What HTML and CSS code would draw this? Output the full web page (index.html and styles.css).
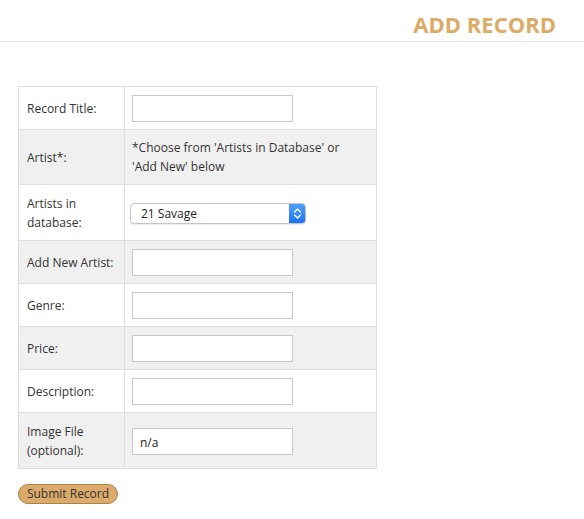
FILE: index.html
```html
<!DOCTYPE html>
<html>
<head>
<meta charset="utf-8">
<link rel="stylesheet" href="styles.css">
</head>
<body>
<header class="top">
  <h1 class="title">ADD RECORD</h1>
</header>
<main class="content">
  <form class="form">
    <table class="record-table">
      <tr>
        <td class="label">Record Title:</td>
        <td class="field"><input class="text-input" type="text"></td>
      </tr>
      <tr class="alt">
        <td class="label">Artist*:</td>
        <td class="field note">*Choose from 'Artists in Database' or<br>'Add New' below</td>
      </tr>
      <tr>
        <td class="label tall">Artists in database:</td>
        <td class="field">
          <div class="select">
            <span class="select-value">21 Savage</span>
            <span class="select-arrow">
              <svg width="9" height="13" viewBox="0 0 9 13"><path d="M1.5 5 L4.5 2 L7.5 5 M1.5 8 L4.5 11 L7.5 8" fill="none" stroke="#fff" stroke-width="1.4" stroke-linecap="round" stroke-linejoin="round"/></svg>
            </span>
          </div>
        </td>
      </tr>
      <tr class="alt">
        <td class="label">Add New Artist:</td>
        <td class="field"><input class="text-input" type="text"></td>
      </tr>
      <tr>
        <td class="label">Genre:</td>
        <td class="field"><input class="text-input" type="text"></td>
      </tr>
      <tr class="alt">
        <td class="label">Price:</td>
        <td class="field"><input class="text-input" type="text"></td>
      </tr>
      <tr>
        <td class="label">Description:</td>
        <td class="field"><input class="text-input" type="text"></td>
      </tr>
      <tr class="alt">
        <td class="label tall">Image File (optional):</td>
        <td class="field"><input class="text-input" type="text" value="n/a"></td>
      </tr>
    </table>
    <button class="submit" type="button">Submit Record</button>
  </form>
</main>
</body>
</html>
```
FILE: styles.css
```css
* { box-sizing: border-box; }
body {
  margin: 0;
  font-family: "Open Sans", "DejaVu Sans", sans-serif;
  font-size: 12px;
  color: #333;
  background: #fff;
}
.top {
  border-bottom: 1px solid #e3e3e3;
  padding: 8px 28px 0 0;
  height: 42px;
}
.title {
  margin: 0;
  text-align: right;
  font-size: 22px;
  line-height: 32px;
  font-weight: 700;
  color: #dcab66;
}
.content {
  padding: 44px 18px 0;
}
.record-table {
  border-collapse: collapse;
  width: 359px;
}
.record-table td {
  border: 1px solid #dedede;
  padding: 8px 8px 7px;
  line-height: 19px;
  vertical-align: middle;
}
.record-table tr.alt td { background: #f0f0f0; }
.label { width: 106px; padding-right: 6px; }
.record-table td.field { padding-left: 7px; }
.record-table td.note { padding-top: 8px; padding-bottom: 8px; }
.record-table td.tall { padding-top: 9px; padding-bottom: 8px; }
.text-input {
  display: block;
  width: 161px;
  height: 27px;
  border: 1px solid #c8c8c8;
  background: #fff;
  font-family: "Open Sans", "DejaVu Sans", sans-serif;
  font-size: 12px;
  color: #222;
  padding: 2px 7px 0;
  margin: 0;
}
.select {
  display: flex;
  align-items: center;
  width: 176px;
  height: 21px;
  margin-left: -2px;
  border: 1px solid #c4c4c4;
  border-radius: 4px;
  background: #fff;
  box-shadow: 0 1px 1px rgba(0,0,0,0.08);
  overflow: hidden;
}
.select-value {
  flex: 1;
  padding-left: 10px;
  font-size: 12px;
  line-height: 19px;
  color: #222;
}
.select-arrow {
  width: 16px;
  height: 100%;
  background: linear-gradient(#4fa0fb, #1b74f0);
  display: flex;
  align-items: center;
  justify-content: center;
}
.submit {
  margin-top: 15px;
  width: 100px;
  height: 20px;
  padding: 0;
  border: 1px solid #a9824a;
  border-radius: 10px;
  background: #dcab6b;
  font-family: "Open Sans", "DejaVu Sans", sans-serif;
  font-size: 12px;
  color: #333;
  line-height: 18px;
}
```
